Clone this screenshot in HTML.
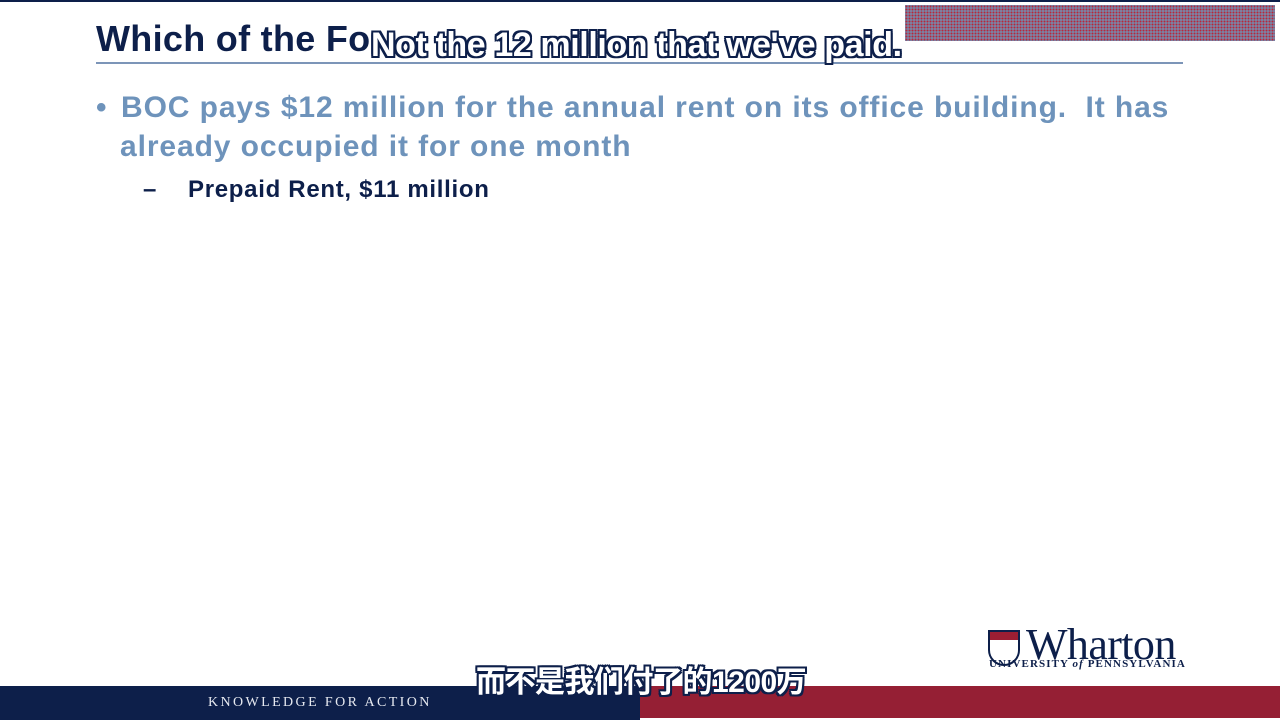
<!DOCTYPE html>
<html><head><meta charset="utf-8"><style>
*{margin:0;padding:0}
body{width:1280px;height:720px;position:relative;overflow:hidden;background:#fff;font-family:"Liberation Sans","Noto Sans CJK SC",sans-serif}
.a{position:absolute;white-space:nowrap}
.sub{color:#fff;font-weight:bold;text-shadow:-2px -2px 0 #0d1f4a,2px -2px 0 #0d1f4a,-2px 2px 0 #0d1f4a,2px 2px 0 #0d1f4a,0 2px 0 #0d1f4a,0 -2px 0 #0d1f4a,2px 0 0 #0d1f4a,-2px 0 0 #0d1f4a}
.bl{font-size:30px;font-weight:bold;color:#6e93bb;letter-spacing:0.9px}
</style></head><body>
<div class="a" style="left:0;top:0;width:1280px;height:2px;background:#0d1f4a"></div>
<div class="a" style="left:905px;top:5px;width:370px;height:36px;background:#7291b6;background-image:radial-gradient(#b8283a 1px,transparent 1.2px);background-size:3px 3px"></div>
<div class="a" style="left:96px;top:18px;font-size:36px;font-weight:bold;color:#0d1f4a;letter-spacing:0.3px">Which of the Fo</div>
<div class="a" style="left:96px;top:62px;width:1087px;height:2px;background:#7c95b8"></div>
<div class="a sub" style="left:371px;top:26px;font-size:34px;letter-spacing:-0.4px">Not the 12 million that we've paid.</div>
<div class="a bl" style="left:96px;top:91px">•</div>
<div class="a bl" style="left:121px;top:91px">BOC pays $12 million for the annual rent on its office building.&nbsp; It has</div>
<div class="a bl" style="left:120px;top:130px">already occupied it for one month</div>
<div class="a" style="left:143px;top:176px;font-size:24px;font-weight:bold;color:#0d1f4a">–</div>
<div class="a" style="left:188px;top:176px;font-size:24px;font-weight:bold;color:#0d1f4a;letter-spacing:0.7px">Prepaid Rent, $11 million</div>
<div class="a" style="left:988px;top:630px;width:32px;height:36px;border:2px solid #0d1f4a;border-radius:0 0 16px 16px;box-sizing:border-box;background:linear-gradient(#9b1e33 0 25%,#fff 25%)"></div>
<div class="a" style="left:1026px;top:619px;font-family:'Liberation Serif',serif;font-size:44px;color:#0d1f4a;letter-spacing:-0.6px">Wharton</div>
<div class="a" style="left:989px;top:658px;font-family:'Liberation Serif',serif;font-size:11px;font-weight:bold;color:#0d1f4a;letter-spacing:1.1px">UNIVERSITY <i>of</i> PENNSYLVANIA</div>
<div class="a" style="left:0;top:686px;width:640px;height:34px;background:#0d1f4a"></div>
<div class="a" style="left:640px;top:686px;width:640px;height:32px;background:#951f34"></div>
<div class="a" style="left:208px;top:695px;font-family:'Liberation Serif',serif;font-size:14px;color:#e6e9f0;letter-spacing:2.4px">KNOWLEDGE FOR ACTION</div>
<div class="a sub" style="left:476px;top:657px;font-size:30px;letter-spacing:-0.5px">而不是我们付了的1200万</div>
</body></html>
